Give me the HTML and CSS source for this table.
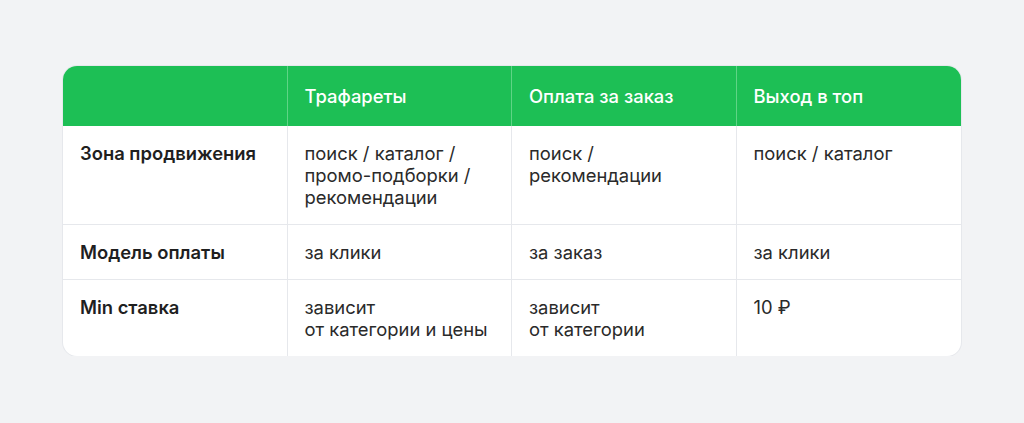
FILE: index.html
```html
<!DOCTYPE html>
<html lang="ru">
<head>
<meta charset="utf-8">
<link rel="stylesheet" href="styles.css">
</head>
<body>
<div class="page">
  <table class="cmp">
    <thead>
      <tr>
        <th></th>
        <th>Трафареты</th>
        <th>Оплата за заказ</th>
        <th>Выход в топ</th>
      </tr>
    </thead>
    <tbody>
      <tr>
        <td class="label">Зона продвижения</td>
        <td>поиск / каталог /<br>промо-подборки /<br>рекомендации</td>
        <td>поиск /<br>рекомендации</td>
        <td>поиск / каталог</td>
      </tr>
      <tr>
        <td class="label">Модель оплаты</td>
        <td>за клики</td>
        <td>за заказ</td>
        <td>за клики</td>
      </tr>
      <tr>
        <td class="label">Min ставка</td>
        <td>зависит<br>от категории и цены</td>
        <td>зависит<br>от категории</td>
        <td>10 ₽</td>
      </tr>
    </tbody>
  </table>
</div>
</body>
</html>
```
FILE: styles.css
```css
html, body {
  margin: 0;
  padding: 0;
  background: #f2f3f5;
}
body {
  font-family: Inter, "Noto Sans", sans-serif;
  color: #2a2a2a;
}
.page {
  padding: 66px 63px 0 63px;
}
.cmp {
  width: 898px;
  border-collapse: separate;
  border-spacing: 0;
  table-layout: fixed;
  background: #ffffff;
  border-radius: 14px;
  box-shadow: 0 0 0 1px #e6e8ec;
  font-size: 18.4px;
  line-height: 22px;
}
.cmp th, .cmp td {
  text-align: left;
  vertical-align: top;
  padding: 16px 17px 16px 17px;
  border-right: 1px solid #e6e8ec;
  border-bottom: 1px solid #e6e8ec;
}
.cmp th:last-child, .cmp td:last-child {
  border-right: none;
}
.cmp tbody tr:last-child td {
  border-bottom: none;
}
.cmp thead th {
  background: #1dbf55;
  color: #ffffff;
  font-weight: 500;
  height: 60px;
  box-sizing: border-box;
  padding-top: 19px;
  padding-bottom: 19px;
  border-right-color: #5fd486;
  border-bottom: none;
}
.cmp thead th:first-child { border-top-left-radius: 14px; }
.cmp thead th:last-child { border-top-right-radius: 14px; }
.cmp tbody tr:last-child td:first-child { border-bottom-left-radius: 14px; }
.cmp tbody tr:last-child td:last-child { border-bottom-right-radius: 14px; }
.cmp td.label {
  font-weight: 600;
  color: #1f1f1f;
}
```
